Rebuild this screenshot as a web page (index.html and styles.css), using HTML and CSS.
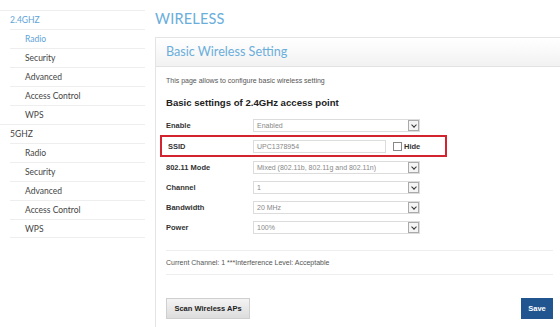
FILE: index.html
```html
<!DOCTYPE html>
<html lang="en">
<head>
  <meta charset="UTF-8" />
  <title>Wireless</title>
  <link rel="stylesheet" href="styles.css">
</head>
<body>
  <div class="page">
    <nav class="sidebar">
      <div class="group active">2.4GHZ</div>
      <div class="item active">Radio</div>
      <div class="item">Security</div>
      <div class="item">Advanced</div>
      <div class="item">Access Control</div>
      <div class="item">WPS</div>
      <div class="group">5GHZ</div>
      <div class="item">Radio</div>
      <div class="item">Security</div>
      <div class="item">Advanced</div>
      <div class="item">Access Control</div>
      <div class="item">WPS</div>
    </nav>

    <main class="main">
      <h1>WIRELESS</h1>
      <section class="panel">
        <div class="panel-head">Basic Wireless Setting</div>
        <div class="panel-body">
          <p class="intro">This page allows to configure basic wireless setting</p>
          <h2>Basic settings of 2.4GHz access point</h2>

          <div class="row">
            <label>Enable</label>
            <div class="select"><span>Enabled</span><i class="arrow"></i></div>
          </div>
          <div class="row ssid">
            <label>SSID</label>
            <div class="input">UPC1378954</div>
            <span class="check"></span><b class="hide">Hide</b>
          </div>
          <div class="row">
            <label>802.11 Mode</label>
            <div class="select"><span>Mixed (802.11b, 802.11g and 802.11n)</span><i class="arrow"></i></div>
          </div>
          <div class="row">
            <label>Channel</label>
            <div class="select"><span>1</span><i class="arrow"></i></div>
          </div>
          <div class="row">
            <label>Bandwidth</label>
            <div class="select"><span>20 MHz</span><i class="arrow"></i></div>
          </div>
          <div class="row">
            <label>Power</label>
            <div class="select"><span>100%</span><i class="arrow"></i></div>
          </div>

          <p class="status">Current Channel: 1 ***Interference Level: Acceptable</p>

          <div class="actions">
            <button class="btn-scan">Scan Wireless APs</button>
            <button class="btn-save">Save</button>
          </div>
        </div>
      </section>
    </main>
  </div>
</body>
</html>
```

FILE: styles.css
```css
* {
  margin: 0;
  padding: 0;
  box-sizing: border-box;
}
body {
  font-family: 'Liberation Sans', Arial, sans-serif;
  background: #fff;
  color: #333;
  overflow: hidden;
  width: 560px;
  height: 327px;
}
.page {
  display: flex;
  align-items: flex-start;
}
.sidebar {
  width: 155px;
  flex-shrink: 0;
  padding: 10px 10px 0 10px;
  font-family: Lato, 'Liberation Sans', sans-serif;
  font-size: 8.5px;
  color: #444;
}
.sidebar .group,
.sidebar .item {
  height: 19px;
  line-height: 18px;
  border-top: 1px solid #eee;
}
.sidebar .group {
  margin-left: -10px;
  padding-left: 10px;
}
.sidebar .item {
  padding-left: 15px;
}
.sidebar .active {
  color: #5ea3d8;
}
.sidebar .item:last-child {
  border-bottom: 1px solid #eee;
}
.main {
  width: 420px;
  flex-shrink: 0;
}
.main h1 {
  font-family: Lato, 'Liberation Sans', sans-serif;
  font-weight: normal;
  font-size: 14.5px;
  letter-spacing: 0.2px;
  color: #6aaedb;
  height: 37px;
  line-height: 38px;
}
.panel {
  border: 1px solid #e4e4e4;
  border-right: none;
  height: 300px;
}
.panel-head {
  height: 29px;
  line-height: 28px;
  padding-left: 10px;
  font-family: Lato, 'Liberation Sans', sans-serif;
  font-size: 12.6px;
  color: #6aaedb;
  background: linear-gradient(#ffffff, #f2f2f2);
  border-bottom: 1px solid #e2e2e2;
}
.panel-body {
  padding: 0 0 0 10px;
  width: 398px;
}
.intro {
  font-size: 7px;
  color: #555;
  margin-top: 9px;
  height: 10px;
  line-height: 10px;
}
.panel-body h2 {
  font-size: 9.6px;
  color: #222;
  margin-top: 10px;
  height: 14px;
  line-height: 14px;
  margin-bottom: 5px;
}
.row {
  display: flex;
  align-items: center;
  height: 20px;
  font-size: 7.5px;
}
.row label {
  width: 87px;
  font-weight: bold;
  color: #333;
}
.select,
.input {
  display: flex;
  align-items: center;
  width: 167px;
  height: 13px;
  border: 1px solid #dcdcdc;
  font-size: 7px;
  color: #888;
  padding-left: 3px;
}
.select span {
  flex: 1;
}
.arrow {
  width: 11px;
  height: 11px;
  border: 1px solid #aaa;
  background: #f4f4f4;
  position: relative;
}
.arrow::after {
  content: '';
  position: absolute;
  left: 3px;
  top: 2px;
  width: 3px;
  height: 3px;
  border-right: 1.3px solid #333;
  border-bottom: 1.3px solid #333;
  transform: rotate(45deg);
}
.row.ssid {
  margin-left: -6px;
  padding-left: 6px;
  width: 287px;
  height: 22px;
  border: 2px solid #d2232f;
}
.row.ssid label {
  width: 85px;
}
.input {
  width: 133px;
}
.check {
  width: 9px;
  height: 9px;
  border: 1px solid #888;
  margin-left: 7px;
}
.hide {
  margin-left: 2px;
  font-size: 7.5px;
  color: #333;
}
.status {
  margin-top: 13px;
  width: 387px;
  border-top: 1px solid #eee;
  border-bottom: 1px solid #eee;
  height: 25px;
  line-height: 23px;
  font-size: 7px;
  color: #555;
}
.actions {
  display: flex;
  justify-content: space-between;
  align-items: center;
  width: 387px;
  margin-top: 23px;
}
.btn-scan {
  width: 84px;
  height: 21px;
  font-family: 'Liberation Sans', Arial, sans-serif;
  font-weight: bold;
  font-size: 7.5px;
  color: #222;
  border: 1px solid #cfcfcf;
  background: linear-gradient(#f4f4f4, #dcdcdc);
}
.btn-save {
  width: 32px;
  height: 21px;
  font-family: 'Liberation Sans', Arial, sans-serif;
  font-weight: bold;
  font-size: 7.5px;
  color: #fff;
  border: none;
  background: #21558f;
}
```
